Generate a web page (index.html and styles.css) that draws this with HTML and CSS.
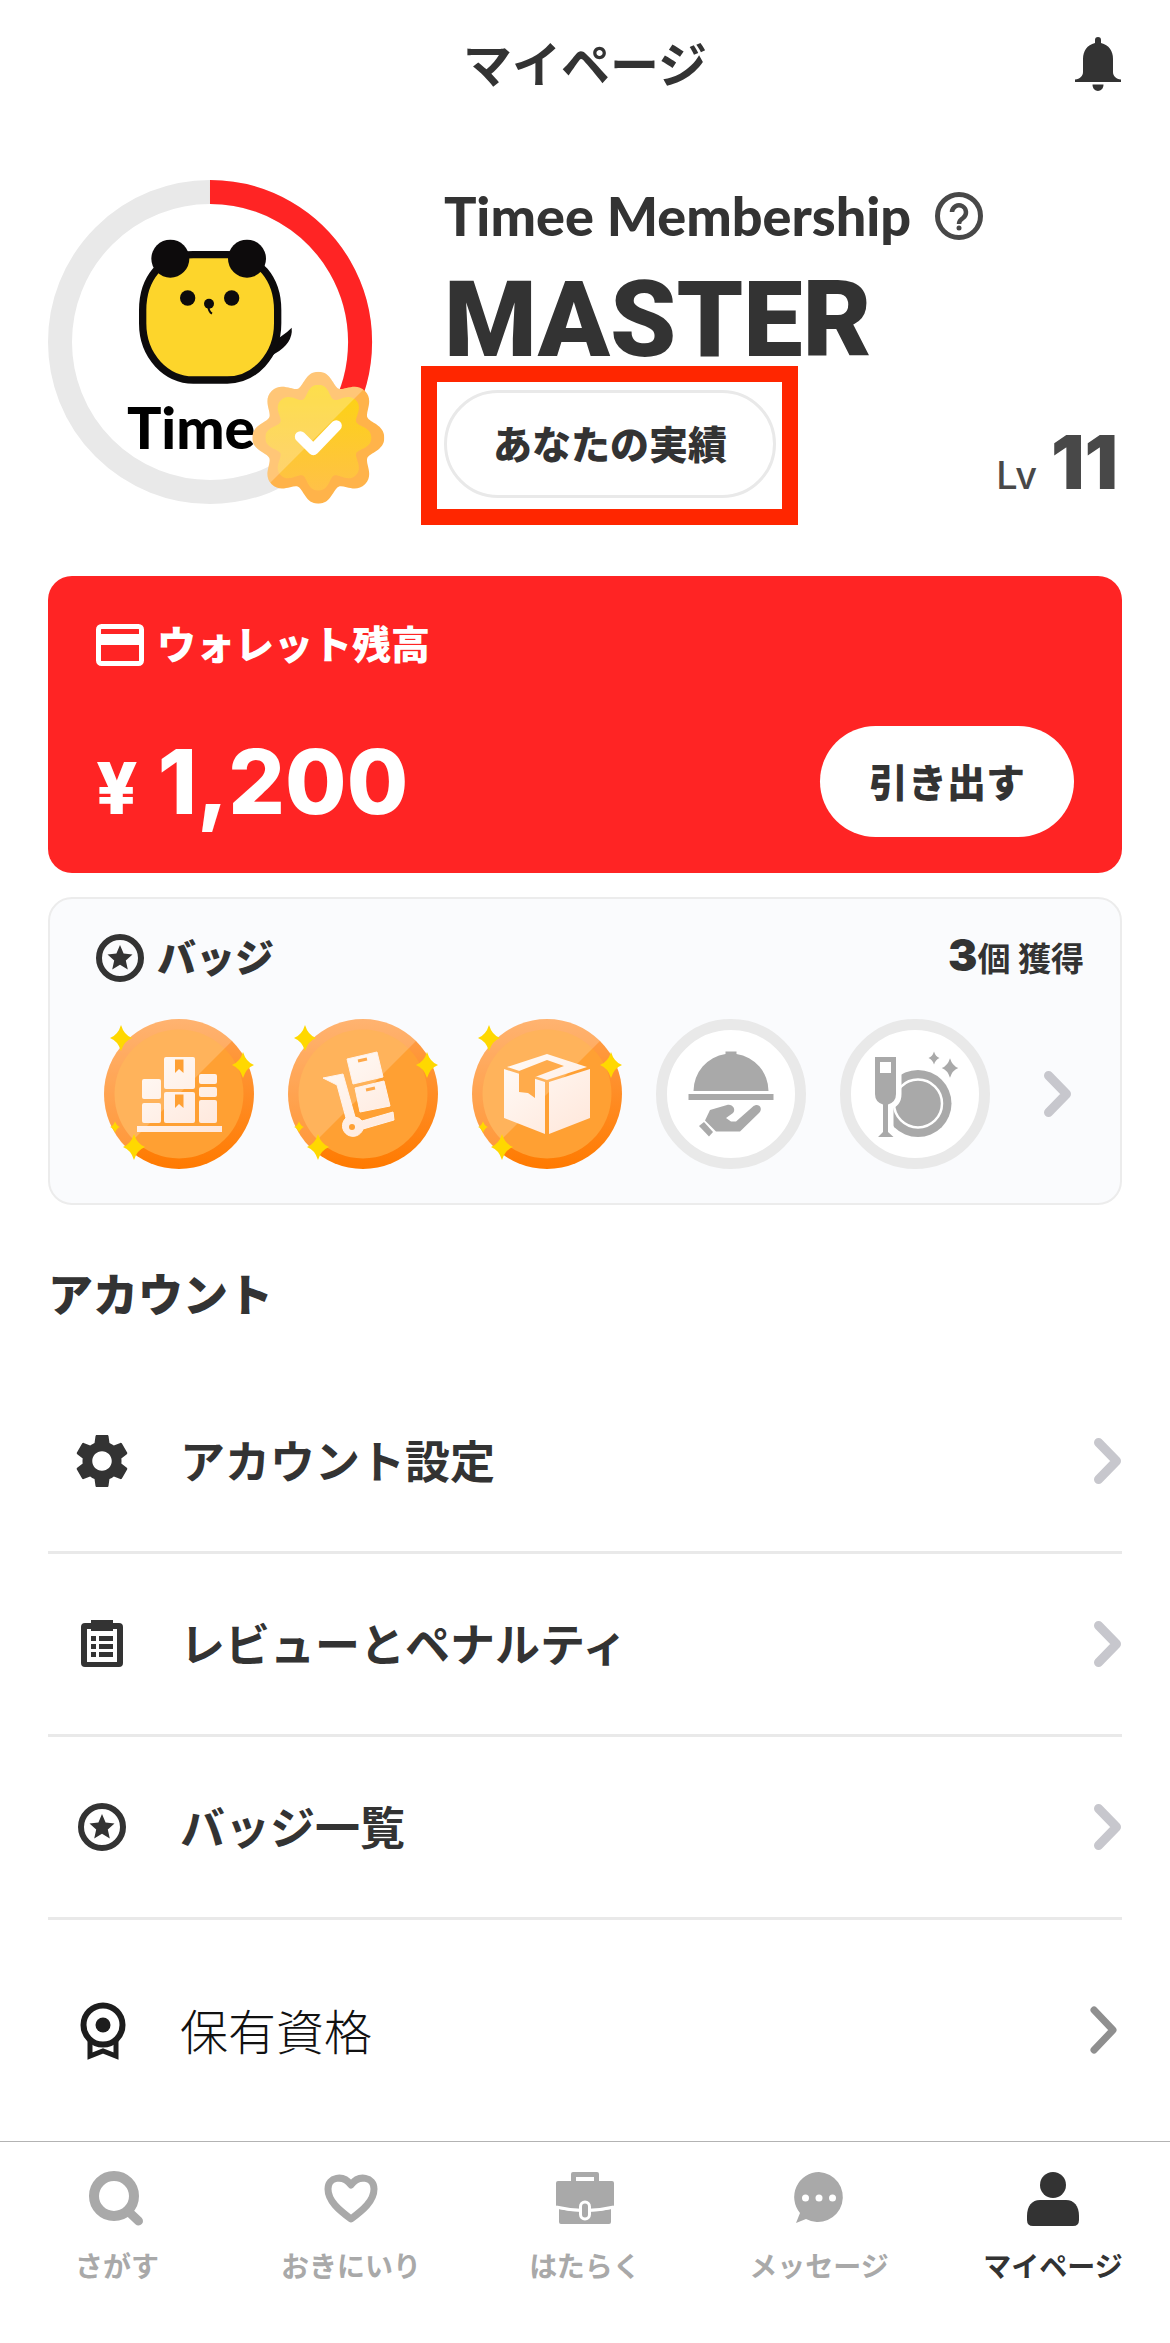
FILE: index.html
```html
<!DOCTYPE html>
<html lang="ja">
<head>
<meta charset="utf-8">
<meta name="viewport" content="width=device-width, initial-scale=1">
<title>マイページ</title>
<link rel="stylesheet" href="styles.css">
</head>
<body>
<svg class="defs" width="0" height="0" aria-hidden="true">
  <defs>
    <linearGradient id="coin-rim" x1="0" y1="0" x2="0" y2="1">
      <stop offset="0" stop-color="#ffa04c"/><stop offset="1" stop-color="#ff7a00"/>
    </linearGradient>
    <linearGradient id="cream" gradientUnits="userSpaceOnUse" x1="-30" y1="-40" x2="30" y2="40">
      <stop offset="0" stop-color="#fffaf6"/><stop offset="1" stop-color="#ffe8dc"/>
    </linearGradient>
    <linearGradient id="seal-gold" x1="0" y1="0" x2="0" y2="1">
      <stop offset="0" stop-color="#fcd40f"/><stop offset="1" stop-color="#ffc148"/>
    </linearGradient>
    <path id="spark" d="M0-13Q3-3 11 0Q3 3 0 13Q-3 3-11 0Q-3-3 0-13Z"/>
    <g id="coin">
      <circle r="75" fill="url(#coin-rim)"/>
      <circle r="64.500" fill="#ffa033"/>
      <path d="M53-53A75 75 0 1 0-53 53Z" fill="#fff" opacity=".2"/>
    </g>
    <g id="coin-sparks" fill="#ffd800">
      <use href="#spark" x="-58" y="-56"/>
      <use href="#spark" x="64" y="-29"/>
      <use href="#spark" x="-45" y="53"/>
      <use href="#spark" transform="translate(-64 33) scale(.45)"/>
    </g>
    <path id="star" d="M0-13L3.600-4.600 12.500-3.600 5.800 2.400 7.800 11.500 0 6.800-7.800 11.500-5.800 2.400-12.500-3.600-3.600-4.600Z" stroke-linejoin="round"/>
    <path id="petal" d="M0 0L-20.300-49C-14.800-51.300-13-66 0-66S14.800-51.300 20.300-49Z"/>
    <path id="petal-in" d="M0 0L-15.700-37.900C-11-39.800-11-53 0-53S11-39.800 15.700-37.900Z"/>
    <clipPath id="seal-out">
      <circle r="53"/>
      <use href="#petal"/><use href="#petal" transform="rotate(45)"/><use href="#petal" transform="rotate(90)"/><use href="#petal" transform="rotate(135)"/>
      <use href="#petal" transform="rotate(180)"/><use href="#petal" transform="rotate(225)"/><use href="#petal" transform="rotate(270)"/><use href="#petal" transform="rotate(315)"/>
    </clipPath>
    <clipPath id="seal-in">
      <circle r="41"/>
      <use href="#petal-in"/><use href="#petal-in" transform="rotate(45)"/><use href="#petal-in" transform="rotate(90)"/><use href="#petal-in" transform="rotate(135)"/>
      <use href="#petal-in" transform="rotate(180)"/><use href="#petal-in" transform="rotate(225)"/><use href="#petal-in" transform="rotate(270)"/><use href="#petal-in" transform="rotate(315)"/>
    </clipPath>
  </defs>
</svg>

<header class="topbar">
  <h1 class="topbar-title">マイページ</h1>
  <button class="bell" type="button" aria-label="お知らせ">
    <svg width="48" height="54" viewBox="0 0 48 54" fill="currentColor"><path d="M21 3a3 3 0 0 1 6 0v3c8 2 12 8 12 16v13c0 4 3 7 8 7.500V45H1v-2.500C6 42 9 39 9 35V22c0-8 4-14 12-16ZM18.500 47.500h11C29.500 56 18.500 56 18.500 47.500Z"/></svg>
  </button>
</header>

<main class="page">
  <section class="profile">
    <svg class="avatar" viewBox="54 60 1008 972" role="img" aria-label="レベル進捗">
      <circle cx="540" cy="546" r="450" fill="none" stroke="#e9e9e9" stroke-width="72"/>
      <path d="M540 96A450 450 0 0 1 930 771" fill="none" stroke="#ff2424" stroke-width="72"/>
      <path d="M785 503Q790 550 733 582L700 610 705 555Q760 530 785 503Z" fill="#0d0b0c"/>
      <path d="M490 284H592C690 284 743 360 743 450V490C743 590 670 660 592 660H490C410 660 338 590 338 490V450C338 360 390 284 490 284Z" fill="#fdd52b" stroke="#0d0b0c" stroke-width="22"/>
      <g fill="#0d0b0c">
        <circle cx="421" cy="296" r="57"/><circle cx="651" cy="296" r="57"/>
        <circle cx="473" cy="414" r="23"/><circle cx="605" cy="414" r="23"/><circle cx="537" cy="431" r="15"/>
        <path d="M535 440Q536 455 546 461" fill="none" stroke="#0d0b0c" stroke-width="6"/>
      </g>
      <text class="avatar-name" x="291" y="867">Time</text>
      <g transform="translate(865 833) scale(3)">
        <g clip-path="url(#seal-out)"><rect x="-70" y="-70" width="140" height="140" fill="#ffb34a"/></g>
        <g clip-path="url(#seal-in)"><rect x="-54" y="-54" width="108" height="108" fill="url(#seal-gold)"/></g>
        <g clip-path="url(#seal-out)"><path d="M-70-70H70L-70 70Z" transform="translate(-3 0)" fill="#fff" opacity=".25"/></g>
        <path d="M-18-1L-5 12 18-12" fill="none" stroke="#fff" stroke-width="11" stroke-linecap="round" stroke-linejoin="round"/>
      </g>
    </svg>
    <div class="profile-info">
      <div class="membership">
        <span class="membership-name">Timee Membership</span>
        <button class="help" type="button" aria-label="ヘルプ">
          <svg width="48" height="48" viewBox="0 0 48 48" fill="none" stroke="currentColor"><circle cx="24" cy="24" r="21.500" stroke-width="5"/><path d="M17 20a7 7 0 1 1 11 6c-3 2-4 3-4 6" stroke-width="4.500"/><circle cx="24" cy="36" r="2.500" fill="currentColor" stroke="none"/></svg>
        </button>
      </div>
      <p class="rank">MASTER</p>
      <div class="profile-bottom">
        <div class="highlighted">
          <button class="results" type="button">あなたの実績</button>
          <span class="highlight-frame"></span>
        </div>
        <p class="level"><span class="level-unit">Lv</span><strong class="level-value">11</strong></p>
      </div>
    </div>
  </section>

  <section class="wallet">
    <h2 class="card-title">
      <svg width="48" height="42" viewBox="0 0 48 42"><rect x="2.500" y="2.500" width="43" height="37" rx="3" fill="none" stroke="currentColor" stroke-width="5"/><path d="M3 10H45V21H3Z" fill="currentColor"/></svg>
      <span class="card-title-text">ウォレット残高</span>
    </h2>
    <div class="wallet-row">
      <p class="balance"><span class="yen">¥</span><span class="amount">1,200</span></p>
      <button class="withdraw" type="button">引き出す</button>
    </div>
  </section>

  <section class="badges">
    <div class="badges-head">
      <h2 class="card-title">
        <svg width="48" height="48" viewBox="-24 -24 48 48"><circle r="21" fill="none" stroke="currentColor" stroke-width="6"/><use href="#star" fill="currentColor"/></svg>
        <span class="card-title-text">バッジ</span>
      </h2>
      <p class="badges-count"><strong class="badges-number">3</strong>個 獲得</p>
    </div>
    <div class="badges-row">
      <svg class="badge" viewBox="-75 -75 150 150">
        <use href="#coin"/>
        <g fill="url(#cream)">
          <rect x="-15" y="-37" width="31" height="32" rx="2"/><rect x="-15" y="-2" width="31" height="31" rx="2"/>
          <rect x="-37" y="-15" width="19" height="20" rx="2"/><rect x="-37" y="9" width="19" height="20" rx="2"/>
          <rect x="20" y="-20" width="18" height="10" rx="2"/><rect x="20" y="-7" width="18" height="10" rx="2"/><rect x="20" y="6" width="18" height="23" rx="2"/>
          <rect x="-42" y="32" width="85" height="6"/>
        </g>
        <path d="M-4-34.500H4.500V-21L0-25-4-21ZM-4 .500H4.500V14L0 10-4 14Z" fill="#ffa033"/>
        <use href="#coin-sparks"/>
      </svg>
      <svg class="badge" viewBox="-75 -75 150 150">
        <use href="#coin"/>
        <g fill="url(#cream)" stroke="#fff3ec" stroke-width="1" stroke-linejoin="round">
          <path d="M-16-35L14-42 20-17-10-10Z"/><path d="M-8-6L21-13 27 12-3 18Z"/>
          <path d="M-40-16L-20-20-8 23A10.500 10.500 0 0 1-1 27L30 18 31 26 0 35A10.500 10.500 0 1 1-17 24L-26-9Z"/>
        </g>
        <path d="M-5-33L4-35M3-4L12-6" stroke="#ffa94a" stroke-width="3"/>
        <circle cx="-11" cy="33" r="3" fill="#ffa033"/>
        <use href="#coin-sparks"/>
      </svg>
      <svg class="badge" viewBox="-75 -75 150 150">
        <use href="#coin"/>
        <g fill="url(#cream)">
          <path d="M0-40L40-27 0-14-40-27Z"/><path d="M-43-25L-2-12V40L-43 24Z"/><path d="M43-25L2-12V40L43 24Z"/>
        </g>
        <path d="M0-34L17-28-12-17V4L-19-1-28-2V-23Z" fill="#ffab4b"/>
        <use href="#coin-sparks"/>
      </svg>
      <svg class="badge" viewBox="-75 -75 150 150">
        <circle r="69.500" fill="#fff" stroke="#e9e9e9" stroke-width="11"/>
        <g fill="#a9a9a9">
          <path d="M-37.500-3A37.500 37.500 0 0 1-5.500-40V-42.500H5.500V-40A37.500 37.500 0 0 1 37.500-3Z"/>
          <rect x="-42.500" y="0" width="85" height="6"/>
          <path d="M-32 32L-27 28-18 38-22 42.500Z"/>
          <path d="M-26 26.500L-21 16-4 11C1 9.500 5.500 15 2 19L-5 24 0 27.500H5L22 12.500C27 8 33 14 28 19L9 37.500H-15Z"/>
        </g>
      </svg>
      <svg class="badge" viewBox="-75 -75 150 150">
        <circle r="69.500" fill="#fff" stroke="#e9e9e9" stroke-width="11"/>
        <g fill="#a9a9a9">
          <circle cx="3" cy="9.500" r="33.500"/>
          <circle cx="3" cy="9.500" r="24" stroke="#fff" stroke-width="2.500"/>
          <g stroke="#fff" stroke-width="11"><path d="M-40-37H-19V0Q-19 8-27 10.500V38H-32V10.500Q-40 8-40 0Z"/></g>
          <path d="M-40-37H-19V0Q-19 8-27 10.500V38L-21.500 43H-37L-32 38V10.500Q-40 8-40 0Z"/>
          <use href="#spark" transform="translate(19 -36) scale(.5)"/><use href="#spark" transform="translate(35 -26) scale(.75)"/>
        </g>
        <rect x="-35" y="-32" width="11" height="11" fill="#fff"/>
      </svg>
      <a class="badges-more" href="#badges" aria-label="すべてのバッジ"><svg width="28" height="46" viewBox="0 0 28 46"><path d="M4.500 4.500L22.500 23 4.500 41.500" fill="none" stroke="#c7c7cd" stroke-width="9" stroke-linecap="round" stroke-linejoin="round"/></svg></a>
    </div>
  </section>

  <section class="account">
    <h2 class="account-title">アカウント</h2>
    <nav class="menu">
      <a class="menu-row" href="#settings">
        <svg class="menu-icon" width="52" height="52" viewBox="2.400 2.400 19.200 19.200" fill="currentColor"><path d="M19.140 12.940c.040-.300.060-.610.060-.940 0-.320-.020-.640-.070-.940l2.030-1.580c.180-.140.230-.410.120-.610l-1.920-3.320c-.120-.220-.370-.290-.590-.220l-2.390.960c-.500-.380-1.030-.700-1.620-.940L14.400 2.810c-.040-.240-.240-.410-.480-.410h-3.840c-.240 0-.430.170-.470.410L9.250 5.350C8.660 5.590 8.120 5.920 7.630 6.290L5.240 5.330c-.220-.080-.470 0-.590.220L2.740 8.870c-.120.210-.080.470.120.610l2.030 1.580C4.840 11.360 4.800 11.690 4.800 12s.020.640.070.940l-2.030 1.580c-.180.140-.230.410-.120.610l1.920 3.320c.120.220.370.290.590.220l2.390-.960c.500.380 1.030.700 1.620.940l.360 2.540c.050.240.240.410.480.410h3.840c.240 0 .440-.170.470-.410l.360-2.540c.590-.240 1.130-.560 1.620-.940l2.390.960c.220.080.470 0 .590-.220l1.920-3.320c.120-.220.070-.470-.120-.610L19.140 12.940zM12 15.600c-1.980 0-3.600-1.620-3.600-3.600s1.620-3.600 3.600-3.600 3.600 1.620 3.600 3.600-1.620 3.600-3.600 3.600z"/></svg>
        <span class="menu-label">アカウント設定</span>
        <svg width="28" height="46" viewBox="0 0 28 46"><path d="M4.500 4.500L22.500 23 4.500 41.500" fill="none" stroke="#c7c7cd" stroke-width="9" stroke-linecap="round" stroke-linejoin="round"/></svg>
      </a>
      <a class="menu-row" href="#reviews">
        <svg class="menu-icon" width="52" height="48" viewBox="0 0 52 48" fill="currentColor"><path d="M15 0H37V3H43Q47 3 47 7V43Q47 47 43 47H9Q5 47 5 43V7Q5 3 9 3H15ZM11 9V42H41V9H37V11H15V9Z" fill-rule="evenodd"/><path d="M15 16h5v5h-5zM23 16h14v5H23zM15 24h5v5h-5zM23 24h14v5H23zM15 32h5v5h-5zM23 32h14v5H23z"/></svg>
        <span class="menu-label">レビューとペナルティ</span>
        <svg width="28" height="46" viewBox="0 0 28 46"><path d="M4.500 4.500L22.500 23 4.500 41.500" fill="none" stroke="#c7c7cd" stroke-width="9" stroke-linecap="round" stroke-linejoin="round"/></svg>
      </a>
      <a class="menu-row" href="#badges">
        <svg class="menu-icon" width="52" height="48" viewBox="-26 -24 52 48"><circle r="21" fill="none" stroke="currentColor" stroke-width="6"/><use href="#star" fill="currentColor"/></svg>
        <span class="menu-label">バッジ一覧</span>
        <svg width="28" height="46" viewBox="0 0 28 46"><path d="M4.500 4.500L22.500 23 4.500 41.500" fill="none" stroke="#c7c7cd" stroke-width="9" stroke-linecap="round" stroke-linejoin="round"/></svg>
      </a>
      <a class="menu-row menu-row-last" href="#qualifications">
        <svg class="menu-icon" width="52" height="58" viewBox="0 0 52 58" fill="none" stroke="#1d1d1d" stroke-width="6"><circle cx="27" cy="24" r="19.500"/><path d="M14 40V55L27 50 40 55V40" stroke-width="5"/><circle cx="27" cy="24" r="7.500" fill="#1d1d1d" stroke="none"/></svg>
        <span class="menu-label menu-label-light">保有資格</span>
        <svg width="32" height="46" viewBox="0 0 32 46"><path d="M4 3L23 23 4 43" fill="none" stroke="#8f8f8f" stroke-width="7" stroke-linecap="round" stroke-linejoin="round"/></svg>
      </a>
    </nav>
  </section>
</main>

<nav class="tabs">
  <a class="tab" href="#search">
    <svg width="60" height="60" viewBox="0 0 60 60" fill="none" stroke="currentColor"><circle cx="27" cy="29" r="20" stroke-width="10"/><path d="M42 45L51.500 54" stroke-width="9" stroke-linecap="round"/></svg>
    さがす
  </a>
  <a class="tab" href="#favorites">
    <svg width="60" height="60" viewBox="0 0 60 60" fill="none" stroke="currentColor"><path d="M30 52C18 43 7 34 7 22 7 10 22 7 30 18 38 7 53 10 53 22 53 34 42 43 30 52Z" stroke-width="7" stroke-linejoin="round"/></svg>
    おきにいり
  </a>
  <a class="tab" href="#work">
    <svg width="60" height="60" viewBox="0 0 60 60"><path d="M16 14V7Q16 5 18 5H42Q44 5 44 7V14H57Q59 14 59 16V39Q30 47 1 39V16Q1 14 3 14ZM21 10V14H39V10Z" fill="currentColor" fill-rule="evenodd"/><path d="M4 42Q30 48 56 42V55Q56 57 54 57H6Q4 57 4 55Z" fill="currentColor"/><path d="M1 40Q30 47 59 40" fill="none" stroke="#fff" stroke-width="3"/><rect x="25.500" y="35" width="9" height="17" rx="4.500" fill="currentColor" stroke="#fff" stroke-width="3"/></svg>
    はたらく
  </a>
  <a class="tab" href="#messages">
    <svg width="60" height="60" viewBox="0 0 60 60"><path d="M30 5A25 25 0 1 1 17 52L7 56 11 46A25 25 0 0 1 30 5Z" fill="currentColor"/><g fill="#fff"><circle cx="16.500" cy="31" r="3.500"/><circle cx="30" cy="31" r="3.500"/><circle cx="43.500" cy="31" r="3.500"/></g></svg>
    メッセージ
  </a>
  <a class="tab tab-active" href="#mypage" aria-current="page">
    <svg width="60" height="60" viewBox="0 0 60 60" fill="currentColor"><circle cx="30" cy="18" r="13"/><path d="M4 49C4 39 9 33 17 33H43C51 33 56 39 56 49V53Q56 59 50 59H10Q4 59 4 53Z"/></svg>
    マイページ
  </a>
</nav>
</body>
</html>
```
FILE: styles.css
```css
* {
  box-sizing: border-box;
}

body {
  margin: 0;
  min-height: 100vh;
  display: flex;
  flex-direction: column;
  background: #fff;
  color: #333;
  font-family: "Noto Sans CJK JP", sans-serif;
  font-weight: 700;
}

h1, h2, p {
  margin: 0;
}

a {
  color: inherit;
  text-decoration: none;
}

button {
  padding: 0;
  border: 0;
  background: none;
  color: inherit;
  font: inherit;
  cursor: pointer;
}

svg {
  display: block;
  flex: none;
  overflow: visible;
}

.defs {
  position: absolute;
}

.topbar {
  display: grid;
  grid-template-columns: 48px 1fr 48px;
  align-items: center;
  padding: 32px 48px;
}

.topbar-title {
  grid-column: 2;
  padding-bottom: 4px;
  text-align: center;
  font-size: 49px;
  line-height: 60px;
  font-weight: 700;
}

.page {
  flex: 1;
  padding: 52px 48px 0;
}

.profile {
  display: flex;
  gap: 60px;
}

.avatar {
  width: 336px;
  height: 324px;
}

.avatar-name {
  font-family: Lato, sans-serif;
  font-size: 172px;
  font-weight: 900;
  fill: #000;
}

.profile-info {
  flex: 1;
  padding-top: 12px;
}

.membership {
  display: flex;
  align-items: center;
  gap: 24px;
}

.membership-name {
  font-family: Lato, sans-serif;
  font-size: 54px;
  line-height: 48px;
  font-weight: 900;
}

.help {
  color: #484848;
}

.rank {
  margin: 25px 0 15px;
  font-family: Roboto, sans-serif;
  font-size: 106px;
  line-height: 110px;
  font-weight: 900;
}

.profile-bottom {
  display: flex;
  justify-content: space-between;
  align-items: flex-end;
}

.highlighted {
  position: relative;
}

.results {
  display: block;
  padding: 0 46px 4px;
  height: 108px;
  border: 3px solid #e9e9e9;
  border-radius: 54px;
  font-size: 39px;
  font-weight: 900;
}

.highlight-frame {
  position: absolute;
  inset: -24px -22px -27px -23px;
  border: 16px solid #ff2600;
  pointer-events: none;
}

.level {
  display: flex;
  align-items: baseline;
  gap: 14px;
  padding-right: 4px;
  color: #484848;
  font-family: Inter, sans-serif;
}

.level-unit {
  font-size: 38px;
  font-weight: 500;
}

.level-value {
  font-size: 74px;
  line-height: 66px;
  font-weight: 900;
}

.wallet {
  margin-top: 72px;
  padding: 48px 48px 36px;
  border-radius: 24px;
  background: #ff2424;
  color: #fff;
}

.card-title {
  display: flex;
  align-items: center;
  gap: 13px;
  font-size: 39px;
  font-weight: 900;
}

.card-title-text {
  padding-bottom: 6px;
  line-height: 36px;
}

.wallet-row {
  display: flex;
  justify-content: space-between;
  align-items: center;
  height: 111px;
  margin-top: 60px;
}

.balance {
  display: flex;
  align-items: baseline;
  gap: 20px;
  font-family: Inter, sans-serif;
  font-weight: 800;
}

.yen {
  font-size: 72px;
}

.amount {
  font-size: 89px;
}

.withdraw {
  height: 111px;
  padding: 0 49px 4px;
  border-radius: 56px;
  background: #fff;
  color: #333;
  font-size: 39px;
  font-weight: 900;
}

.badges {
  margin-top: 24px;
  padding: 34px 36px 34px 46px;
  border: 2px solid #ececec;
  border-radius: 24px;
  background: #fafbfd;
}

.badges-head {
  display: flex;
  justify-content: space-between;
  align-items: center;
}

.badges-count {
  padding-bottom: 4px;
  font-size: 33px;
  line-height: 44px;
}

.badges-number {
  font-family: Inter, sans-serif;
  font-size: 44px;
  font-weight: 900;
}

.badges-row {
  display: flex;
  align-items: center;
  gap: 34px;
  margin-top: 36px;
  padding: 0 12px 0 8px;
}

.badge {
  width: 150px;
  height: 150px;
}

.badges-more {
  margin-left: auto;
}

.account-title {
  margin-top: 58px;
  font-size: 45px;
  line-height: 60px;
  font-weight: 900;
}

.menu {
  margin-top: 48px;
}

.menu-row {
  display: flex;
  align-items: center;
  gap: 52px;
  height: 183px;
  padding-left: 28px;
  border-bottom: 3px solid #e9e9e9;
}

.menu-label {
  flex: 1;
  padding-bottom: 2px;
  font-size: 45px;
  line-height: 60px;
}

.menu-row-last {
  height: 220px;
  border-bottom: 0;
}

.menu-label-light {
  color: #111;
  font-size: 48px;
  font-weight: 300;
}

.tabs {
  display: grid;
  grid-template-columns: repeat(5, 1fr);
  padding: 25px 0 59px;
  border-top: 1px solid #b3b3b3;
}

.tab {
  display: flex;
  flex-direction: column;
  align-items: center;
  gap: 19px;
  color: #a9a9a9;
  font-size: 28px;
  line-height: 38px;
}

.tab-active {
  color: #333;
}
```
